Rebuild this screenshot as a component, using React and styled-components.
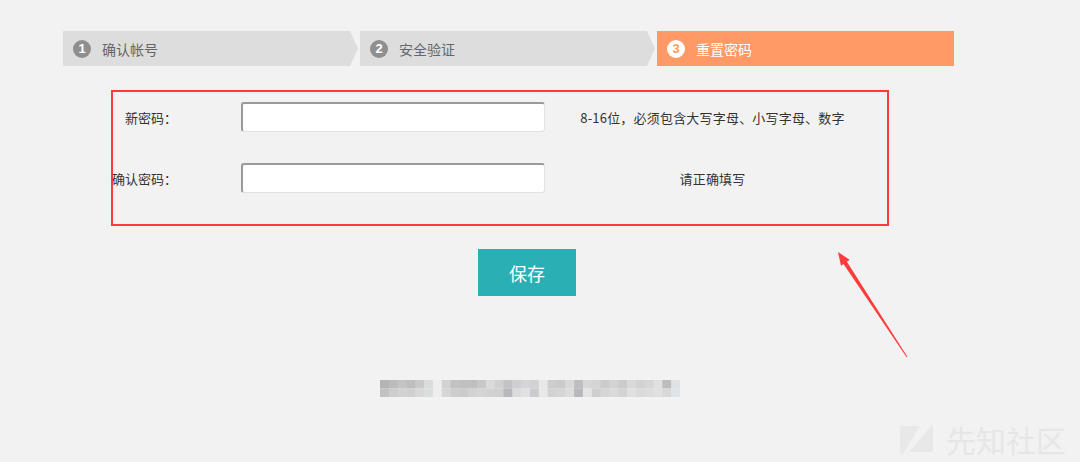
import React from "react";
import styled, { createGlobalStyle } from "styled-components";

const Global = createGlobalStyle`
  html, body { margin: 0; padding: 0; background: #f2f2f2; }
  body { font-family: "Noto Sans CJK SC", "Microsoft YaHei", sans-serif; }
`;

const Page = styled.div`
  position: relative;
  width: 1080px;
  height: 462px;
  overflow: hidden;
  box-sizing: border-box;
  padding: 31px 0 0 63px;
  background: #f2f2f2;
`;

const Steps = styled.div`
  display: flex;
  width: 891px;
  height: 35px;
`;

const Step = styled.div`
  flex: 0 0 297px;
  display: flex;
  align-items: center;
  box-sizing: border-box;
  padding-left: 10px;
  background: ${(p) => (p.$active ? "#ff9966" : "#dddddd")};
  color: ${(p) => (p.$active ? "#ffffff" : "#666666")};
  font-size: 14px;
  clip-path: ${(p) =>
    p.$arrow
      ? "polygon(0 0, calc(100% - 10px) 0, calc(100% - 2px) 50%, calc(100% - 10px) 100%, 0 100%)"
      : "none"};
`;

const Num = styled.span`
  width: 18px;
  height: 18px;
  border-radius: 50%;
  display: flex;
  align-items: center;
  justify-content: center;
  margin-right: 11px;
  background: ${(p) => (p.$active ? "#ffffff" : "#8f8f8f")};
  color: ${(p) => (p.$active ? "#ff9966" : "#ffffff")};
  font: bold 13px "Liberation Sans", Arial, sans-serif;
`;

const FormBox = styled.div`
  margin: 24px 0 0 48px;
  width: 778px;
  height: 136px;
  box-sizing: border-box;
  border: 2px solid #ff3b3b;
  padding-top: 10px;
  display: flex;
  flex-direction: column;
  gap: 31px;
`;

const Row = styled.div`
  display: flex;
  align-items: center;
  height: 30px;
`;

const Label = styled.label`
  flex: 0 0 64px;
  width: 64px;
  min-width: 0;
  display: flex;
  justify-content: flex-end;
  margin-right: 64px;
  white-space: nowrap;
  font-size: 13px;
  color: #333333;
`;

const Input = styled.input`
  flex: 0 0 304px;
  width: 304px;
  height: 30px;
  box-sizing: border-box;
  background: #ffffff;
  border: 1px solid #e2e2e2;
  border-top: 2px solid #9a9a9a;
  border-left: 2px solid #9a9a9a;
  border-radius: 3px;
  outline: none;
`;

const Hint = styled.span`
  flex: 0 0 335px;
  text-align: center;
  font-size: 13px;
  color: #333333;
  white-space: nowrap;
  letter-spacing: 0.2px;
`;

const SaveButton = styled.button`
  display: block;
  margin: 23px 0 0 415px;
  width: 98px;
  height: 47px;
  border: none;
  background: #2ab0b4;
  color: #ffffff;
  font-family: "Noto Sans CJK SC", sans-serif;
  font-size: 18px;
  padding: 0;
`;

const Mosaic = styled.svg`
  display: block;
  margin: 84px 0 0 317px;
`;

const Overlay = styled.svg`
  position: absolute;
  left: 0;
  top: 0;
  pointer-events: none;
`;

const Watermark = styled.div`
  position: absolute;
  left: 900px;
  top: 424px;
  display: flex;
  align-items: center;
  gap: 12px;
  color: #e6e6e6;
  font-size: 30px;
  line-height: 30px;
`;

const mosaicCols = [
  ["#b4b4b4", "#c2c2c2"],
  ["#bcbcbc", "#cdcdcd"],
  ["#c4c4c4", "#d2d2d2"],
  ["#bebebe", "#d0d0d0"],
  ["#c9c9c9", "#d8d8d8"],
  ["#d9dcdc", "#dcdede"],
  ["#eeeeee", "#eeeeee"],
  ["#d2d2d2", "#d6d6d6"],
  ["#c2c2c2", "#cdcdcd"],
  ["#c0c0c0", "#cbcbcb"],
  ["#bfc0bd", "#d2d2d2"],
  ["#c8c8c8", "#d4d4d4"],
  ["#dadada", "#d2d2d2"],
  ["#d0d0d0", "#d0d0d0"],
  ["#c4c4c8", "#b8b8bc"],
  ["#cfcfd3", "#dcdcdc"],
  ["#d5d5d5", "#e1e1e1"],
  ["#d2d2d5", "#cbcbcf"],
  ["#e8e8e8", "#e8e8e8"],
  ["#cdcdcd", "#d2d2d2"],
  ["#cbcbcb", "#d5d5d5"],
  ["#d9d9d9", "#dcdcdc"],
  ["#bdbdc2", "#b8b8bc"],
  ["#d8d8d8", "#e5e5e5"],
  ["#d4d4d4", "#cfcfcf"],
  ["#cbcbcb", "#d5d5d5"],
  ["#d3d3d3", "#dadada"],
  ["#cbcbcb", "#d3d3d3"],
  ["#d9d9d9", "#e0e0e0"],
  ["#d2d2d2", "#dadada"],
  ["#d6d6d6", "#dcdcdc"],
  ["#e0e0e0", "#e0e0e0"],
  ["#bdbdbd", "#d8d8d8"],
  ["#dee2e6", "#dfe4e8"],
];

const steps = [
  { n: "1", label: "确认帐号", arrow: true },
  { n: "2", label: "安全验证", arrow: true },
  { n: "3", label: "重置密码", active: true },
];

export default function App() {
  const cw = 300 / mosaicCols.length;
  return (
    <>
      <Global />
      <Page>
        <Steps>
          {steps.map((s) => (
            <Step key={s.n} $active={s.active} $arrow={s.arrow}>
              <Num $active={s.active}>{s.n}</Num>
              {s.label}
            </Step>
          ))}
        </Steps>

        <FormBox>
          <Row>
            <Label>新密码：</Label>
            <Input type="password" />
            <Hint>8-16位，必须包含大写字母、小写字母、数字</Hint>
          </Row>
          <Row>
            <Label>确认密码：</Label>
            <Input type="password" />
            <Hint>请正确填写</Hint>
          </Row>
        </FormBox>

        <SaveButton>保存</SaveButton>

        <Mosaic width="300" height="17" viewBox="0 0 300 17">
          {mosaicCols.map((c, i) => (
            <g key={i}>
              <rect x={i * cw} y="0" width={cw + 0.5} height="8.5" fill={c[0]} />
              <rect x={i * cw} y="8.5" width={cw + 0.5} height="8.5" fill={c[1]} />
            </g>
          ))}
        </Mosaic>

        <Overlay width="1080" height="462" viewBox="0 0 1080 462">
          <polygon
            points="838,252 849.6,259.8 846.9,261.7 907.4,356.7 906.6,357.3 843.5,263.9 841,265.8"
            fill="#ff3b3b"
          />
        </Overlay>

        <Watermark>
          <svg width="34" height="30" viewBox="0 0 34 30">
            <path d="M0 2 H20 L3 30 H0 Z" fill="#e8e8e8" />
            <path d="M33 0 V28 H9 Z" fill="#e8e8e8" />
          </svg>
          <span>先知社区</span>
        </Watermark>
      </Page>
    </>
  );
}
